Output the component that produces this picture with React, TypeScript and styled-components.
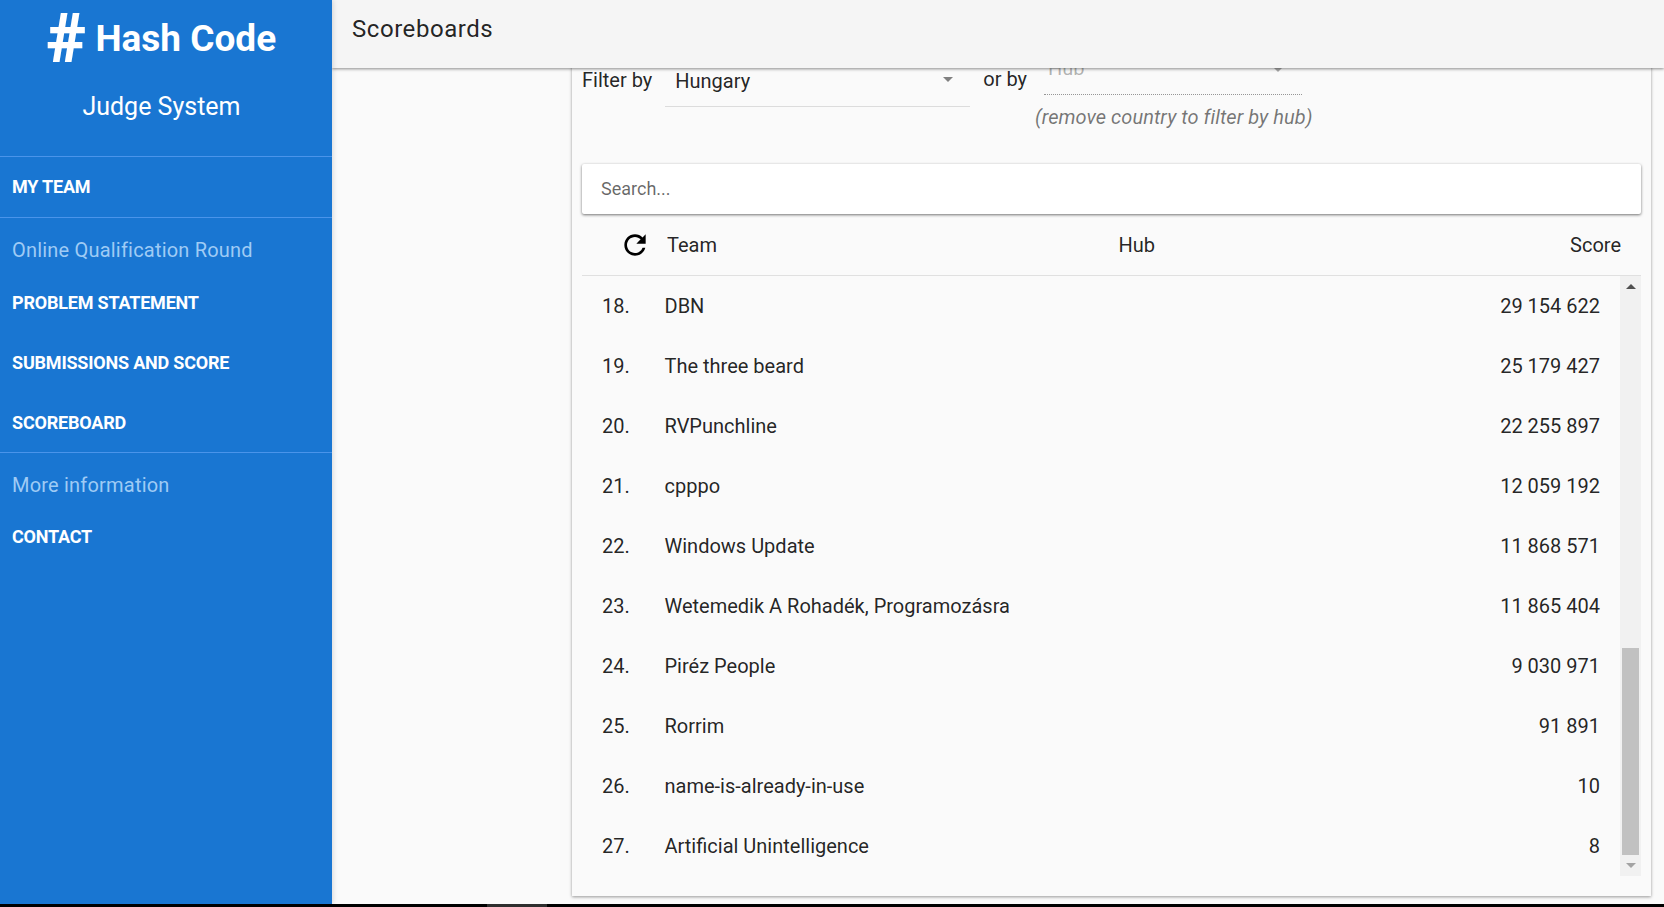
import React from "react";
import styled, { createGlobalStyle } from "styled-components";

const GlobalStyle = createGlobalStyle`
  html, body {
    margin: 0;
    height: 100%;
    overflow: hidden;
    background: #fafafa;
    font-family: Roboto, "Liberation Sans", sans-serif;
    color: rgba(0, 0, 0, 0.87);
  }
  * { box-sizing: border-box; }
`;

const Page = styled.div`
  display: flex;
  flex-direction: column;
  height: 907px;
`;

const Workspace = styled.div`
  display: flex;
  flex: 1;
  min-height: 0;
`;

const Sidebar = styled.aside`
  width: 332px;
  flex: none;
  background: #1976d2;
  color: #fff;
  position: relative;
  z-index: 3;
  box-shadow: 1px 0 5px rgba(0, 0, 0, 0.14);
`;

const Brand = styled.div`
  height: 156px;
  display: flex;
  flex-direction: column;
  align-items: center;
  padding-right: 9px;
`;

const LogoLine = styled.div`
  height: 76px;
  display: flex;
  align-items: center;
  justify-content: center;
  gap: 9px;
  font-size: 37px;
  font-weight: 700;
  padding-top: 1px;
`;

const HashMark = styled.span`
  font-size: 68px;
  font-weight: 900;
  line-height: 74px;
`;

const BrandSub = styled.div`
  font-size: 25px;
  line-height: 32px;
  margin-top: 15px;
`;

const NavSection = styled.div<{ $overlap?: boolean }>`
  border-top: 1px solid #4a94ea;
  margin-top: ${(p) => (p.$overlap ? -1 : 0)}px;
`;

const NavTitle = styled.div<{ $tight?: boolean }>`
  font-size: 20px;
  line-height: 28px;
  letter-spacing: 0.2px;
  padding: 18px 12px ${(p) => (p.$tight ? 8 : 9)}px;
  color: #9fcbf5;
`;

const NavItem = styled.div`
  height: 60px;
  display: flex;
  align-items: center;
  padding: 0 0 2px 12px;
  font-size: 18px;
  font-weight: 700;
  letter-spacing: -0.2px;
`;

const Main = styled.main`
  flex: 1;
  min-width: 0;
  display: flex;
  flex-direction: column;
`;

const TopBar = styled.header`
  height: 68px;
  flex: none;
  background: #f5f5f5;
  padding: 12px 20px;
  font-size: 24px;
  line-height: 34px;
  letter-spacing: 0.55px;
  box-shadow: 0 1px 3px rgba(0, 0, 0, 0.45);
  position: relative;
  z-index: 2;
`;

const Content = styled.div`
  flex: 1;
  min-height: 0;
  overflow: hidden;
  display: flex;
  flex-direction: column;
  justify-content: flex-end;
  padding: 0 13px 8px 240px;
`;

const Card = styled.section`
  flex: none;
  background: #fafafa;
  padding: 0 10px 20px 10px;
  box-shadow: 0 1px 3px rgba(0, 0, 0, 0.4);
`;

const FilterRow = styled.div`
  height: 100px;
  margin-bottom: 14px;
  display: flex;
  align-items: flex-start;
  font-size: 20px;
`;

const FilterLabel = styled.span<{ $left?: number; $top: number }>`
  margin-left: ${(p) => p.$left ?? 0}px;
  margin-top: ${(p) => p.$top}px;
  line-height: 24px;
`;

const SelectBox = styled.div<{ $disabled?: boolean }>`
  position: relative;
  display: flex;
  align-items: flex-start;
  width: ${(p) => (p.$disabled ? 258 : 305)}px;
  height: ${(p) => (p.$disabled ? 45 : 37)}px;
  margin-left: ${(p) => (p.$disabled ? 9 : 0)}px;
  padding: ${(p) => (p.$disabled ? "6px 0 0 4px" : "0 0 0 10px")};
  line-height: ${(p) => (p.$disabled ? 24 : 22)}px;
  color: ${(p) => (p.$disabled ? "rgba(0,0,0,0.3)" : "rgba(0,0,0,0.87)")};
  border-bottom: 1px ${(p) => (p.$disabled ? "dotted rgba(0,0,0,0.4)" : "solid #dcdcdc")};
`;

const Caret = styled.span<{ $disabled?: boolean }>`
  position: absolute;
  top: ${(p) => (p.$disabled ? 17 : 7)}px;
  right: ${(p) => (p.$disabled ? 19 : 17)}px;
  width: 0;
  height: 0;
  border-left: 5px solid transparent;
  border-right: 5px solid transparent;
  border-top: 5px solid ${(p) => (p.$disabled ? "#a8a8a8" : "#808080")};
`;

const SelectSlot = styled.div`
  margin-top: 20px;
  margin-left: 13px;
`;

const HubColumn = styled.div`
  margin-left: 8px;
  display: flex;
  flex-direction: column;
`;

const Hint = styled.div`
  margin-top: 10px;
  line-height: 24px;
  font-style: italic;
  letter-spacing: 0.05px;
  color: rgba(0, 0, 0, 0.54);
`;

const SearchBar = styled.div`
  height: 50px;
  background: #fff;
  display: flex;
  align-items: center;
  padding: 0 0 2px 19px;
  font-size: 18px;
  color: rgba(0, 0, 0, 0.6);
  border-radius: 2px;
  box-shadow: 0 1px 3px rgba(0, 0, 0, 0.55);
`;

const TableHead = styled.div`
  height: 62px;
  display: flex;
  align-items: center;
  padding: 1px 20px 0 37px;
  font-size: 20px;
  border-bottom: 1px solid #e0e0e0;
`;

const RefreshIcon = styled.svg`
  width: 32px;
  height: 32px;
  flex: none;
  margin-right: 16px;
  fill: #000;
`;

const HeadTeam = styled.span`
  width: 451.5px;
`;

const HeadScore = styled.span`
  margin-left: auto;
`;

const TableBody = styled.div`
  display: flex;
  height: 600px;
`;

const RowList = styled.div`
  flex: 1;
  min-width: 0;
`;

const Row = styled.div`
  height: 60px;
  display: flex;
  align-items: center;
  padding: 0 20px 0 20px;
  font-size: 20px;
`;

const Rank = styled.span`
  width: 63px;
  flex: none;
  margin-right: -0.5px;
`;

const TeamName = styled.span`
  flex: 1;
`;

const ScrollTrack = styled.div`
  width: 21px;
  flex: none;
  background: #f1f1f1;
  display: flex;
  flex-direction: column;
  align-items: center;
  padding: 0 2px;
`;

const ScrollButton = styled.div`
  height: 21px;
  flex: none;
  display: flex;
  align-items: center;
  justify-content: center;
`;

const ScrollUp = styled.span`
  width: 0;
  height: 0;
  border-left: 5px solid transparent;
  border-right: 5px solid transparent;
  border-bottom: 5px solid #505050;
`;

const ScrollDown = styled.span`
  width: 0;
  height: 0;
  border-left: 5px solid transparent;
  border-right: 5px solid transparent;
  border-top: 5px solid #a3a3a3;
`;

const ScrollSpace = styled.div`
  flex: 1;
`;

const ScrollThumb = styled.div`
  width: 17px;
  height: 207px;
  flex: none;
  background: #c1c1c1;
`;

const BottomEdge = styled.div`
  height: 3px;
  flex: none;
  background: #000;
  padding-left: 487px;
  position: relative;
  z-index: 4;
`;

const BottomPatch = styled.div`
  width: 60px;
  height: 100%;
  background: #2e2e2e;
`;

const rows = [
  { rank: 18, name: "DBN", score: "29 154 622" },
  { rank: 19, name: "The three beard", score: "25 179 427" },
  { rank: 20, name: "RVPunchline", score: "22 255 897" },
  { rank: 21, name: "cpppo", score: "12 059 192" },
  { rank: 22, name: "Windows Update", score: "11 868 571" },
  { rank: 23, name: "Wetemedik A Rohadék, Programozásra", score: "11 865 404" },
  { rank: 24, name: "Piréz People", score: "9 030 971" },
  { rank: 25, name: "Rorrim", score: "91 891" },
  { rank: 26, name: "name-is-already-in-use", score: "10" },
  { rank: 27, name: "Artificial Unintelligence", score: "8" },
];

const App: React.FC = () => {
  return (
    <Page>
      <GlobalStyle />
      <Workspace>
        <Sidebar>
          <Brand>
            <LogoLine>
              <HashMark>#</HashMark>
              Hash Code
            </LogoLine>
            <BrandSub>Judge System</BrandSub>
          </Brand>
          <NavSection>
            <NavItem>MY TEAM</NavItem>
          </NavSection>
          <NavSection>
            <NavTitle>Online Qualification Round</NavTitle>
            <NavItem>PROBLEM STATEMENT</NavItem>
            <NavItem>SUBMISSIONS AND SCORE</NavItem>
            <NavItem>SCOREBOARD</NavItem>
          </NavSection>
          <NavSection $overlap>
            <NavTitle $tight>More information</NavTitle>
            <NavItem>CONTACT</NavItem>
          </NavSection>
        </Sidebar>
        <Main>
          <TopBar>Scoreboards</TopBar>
          <Content>
            <Card>
              <FilterRow>
                <FilterLabel $top={18}>Filter by</FilterLabel>
                <SelectSlot>
                  <SelectBox>
                    Hungary
                    <Caret />
                  </SelectBox>
                </SelectSlot>
                <FilterLabel $left={13} $top={17}>or by</FilterLabel>
                <HubColumn>
                  <SelectBox $disabled>
                    Hub
                    <Caret $disabled />
                  </SelectBox>
                  <Hint>(remove country to filter by hub)</Hint>
                </HubColumn>
              </FilterRow>
              <SearchBar>Search...</SearchBar>
              <TableHead>
                <RefreshIcon viewBox="0 0 24 24">
                  <path d="M17.65 6.35C16.2 4.9 14.21 4 12 4c-4.42 0-7.99 3.58-7.99 8s3.57 8 7.99 8c3.73 0 6.84-2.55 7.73-6h-2.08c-.82 2.33-3.04 4-5.65 4-3.31 0-6-2.69-6-6s2.69-6 6-6c1.66 0 3.14.69 4.22 1.78L13 11h7V4l-2.35 2.35z" />
                </RefreshIcon>
                <HeadTeam>Team</HeadTeam>
                <span>Hub</span>
                <HeadScore>Score</HeadScore>
              </TableHead>
              <TableBody>
                <RowList>
                  {rows.map((r) => (
                    <Row key={r.rank}>
                      <Rank>{r.rank}.</Rank>
                      <TeamName>{r.name}</TeamName>
                      <span>{r.score}</span>
                    </Row>
                  ))}
                </RowList>
                <ScrollTrack>
                  <ScrollButton>
                    <ScrollUp />
                  </ScrollButton>
                  <ScrollSpace />
                  <ScrollThumb />
                  <ScrollButton>
                    <ScrollDown />
                  </ScrollButton>
                </ScrollTrack>
              </TableBody>
            </Card>
          </Content>
        </Main>
      </Workspace>
      <BottomEdge>
        <BottomPatch />
      </BottomEdge>
    </Page>
  );
};

export default App;
